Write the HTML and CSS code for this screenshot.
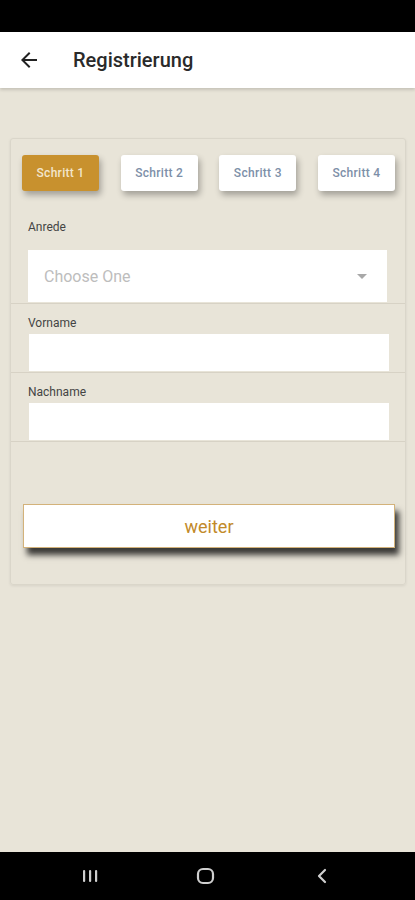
FILE: index.html
```html
<!DOCTYPE html>
<html lang="de">
<head>
    <meta charset="UTF-8">
    <meta name="viewport" content="width=device-width, initial-scale=1.0">
    <title>Registrierung</title>
    <link rel="stylesheet" href="styles.css">
</head>
<body>
    <div class="status-bar"></div>
    <header class="app-bar">
        <svg class="back" width="24" height="24" viewBox="0 0 24 24">
            <path d="M20 11H7.83l5.59-5.59L12 4l-8 8 8 8 1.41-1.41L7.83 13H20v-2z" fill="#222"/>
        </svg>
        <h1>Registrierung</h1>
    </header>
    <main class="content">
        <div class="card">
            <div class="steps">
                <button class="step active">Schritt 1</button>
                <button class="step">Schritt 2</button>
                <button class="step">Schritt 3</button>
                <button class="step">Schritt 4</button>
            </div>

            <div class="row row-first">
                <label class="label">Anrede</label>
                <div class="select">
                    <span class="placeholder">Choose One</span>
                    <span class="caret"></span>
                </div>
            </div>

            <div class="row">
                <label class="label" for="vorname">Vorname</label>
                <input class="field" type="text" id="vorname">
            </div>

            <div class="row">
                <label class="label" for="nachname">Nachname</label>
                <input class="field" type="text" id="nachname">
            </div>

            <button class="next">weiter</button>
        </div>
    </main>
    <nav class="nav-bar">
        <svg width="20" height="16" viewBox="0 0 20 16">
            <rect x="3" y="2" width="2.2" height="12" rx="1" fill="#cfcfcf"/>
            <rect x="9" y="2" width="2.2" height="12" rx="1" fill="#cfcfcf"/>
            <rect x="15" y="2" width="2.2" height="12" rx="1" fill="#cfcfcf"/>
        </svg>
        <svg width="20" height="18" viewBox="0 0 20 18">
            <rect x="2" y="2" width="15" height="14" rx="5" fill="none" stroke="#cfcfcf" stroke-width="2.2"/>
        </svg>
        <svg width="20" height="18" viewBox="0 0 20 18">
            <path d="M13 3 L7 9 L13 15" fill="none" stroke="#cfcfcf" stroke-width="2.2" stroke-linecap="round" stroke-linejoin="round"/>
        </svg>
    </nav>
</body>
</html>
```

FILE: styles.css
```css
body {
    margin: 0;
    height: 900px;
    display: flex;
    flex-direction: column;
    font-family: Roboto, "Noto Sans", sans-serif;
    background-color: #e8e4d8;
}
.status-bar {
    height: 32px;
    background: #000;
}
.app-bar {
    height: 56px;
    background: #fff;
    display: flex;
    align-items: center;
    padding-left: 17px;
    box-shadow: 0 2px 3px rgba(0, 0, 0, 0.15);
    position: relative;
    z-index: 1;
}
.app-bar h1 {
    margin: 0 0 0 32px;
    font-size: 20px;
    font-weight: 500;
    color: #2a2a2a;
}
.content {
    flex-grow: 1;
    padding: 50px 9px 0 10px;
}
.card {
    border: 1px solid #dad6ca;
    border-radius: 3px;
    box-shadow: 0 1px 3px rgba(0, 0, 0, 0.08);
    padding: 16px 0 36px 0;
}
.steps {
    display: flex;
    justify-content: space-between;
    padding: 0 10px 0 11px;
}
.step {
    width: 77px;
    height: 36px;
    border: none;
    border-radius: 3px;
    background: #fff;
    color: #7d8fa8;
    font-family: Roboto, sans-serif;
    font-size: 12px;
    font-weight: 500;
    letter-spacing: 0.3px;
    box-shadow: 2px 4px 6px rgba(0, 0, 0, 0.3);
    padding: 0;
}
.step.active {
    background: #c8912e;
    color: #f3e6cc;
}
.row {
    display: flex;
    flex-direction: column;
    padding: 11px 16px 1px 17px;
    border-bottom: 1px solid #d7d2c5;
}
.row-first {
    padding-top: 28px;
    padding-right: 18px;
}
.label {
    font-size: 12px;
    line-height: 16px;
    color: #444;
    margin-bottom: 3px;
}
.row-first .label {
    margin-bottom: 15px;
}
.select {
    height: 52px;
    background: #fff;
    display: flex;
    align-items: center;
    justify-content: space-between;
    padding: 0 20px 0 16px;
}
.placeholder {
    font-size: 16px;
    color: #bdbdbd;
}
.caret {
    width: 0;
    height: 0;
    border-left: 5px solid transparent;
    border-right: 5px solid transparent;
    border-top: 5px solid #a8a8a8;
}
.field {
    height: 37px;
    border: none;
    background: #fff;
    margin: 0 0 0 1px;
    padding: 0;
}
.next {
    display: block;
    width: 372px;
    height: 44px;
    margin: 62px 0 0 12px;
    background: #fff;
    border: 1px solid #d3b27a;
    color: #c28a2a;
    font-family: Roboto, sans-serif;
    font-size: 18px;
    box-shadow: 4px 7px 6px rgba(0, 0, 0, 0.75);
}
.nav-bar {
    height: 48px;
    background: #000;
    display: flex;
    align-items: center;
    justify-content: space-between;
    padding: 0 83px 0 80px;
}
```
